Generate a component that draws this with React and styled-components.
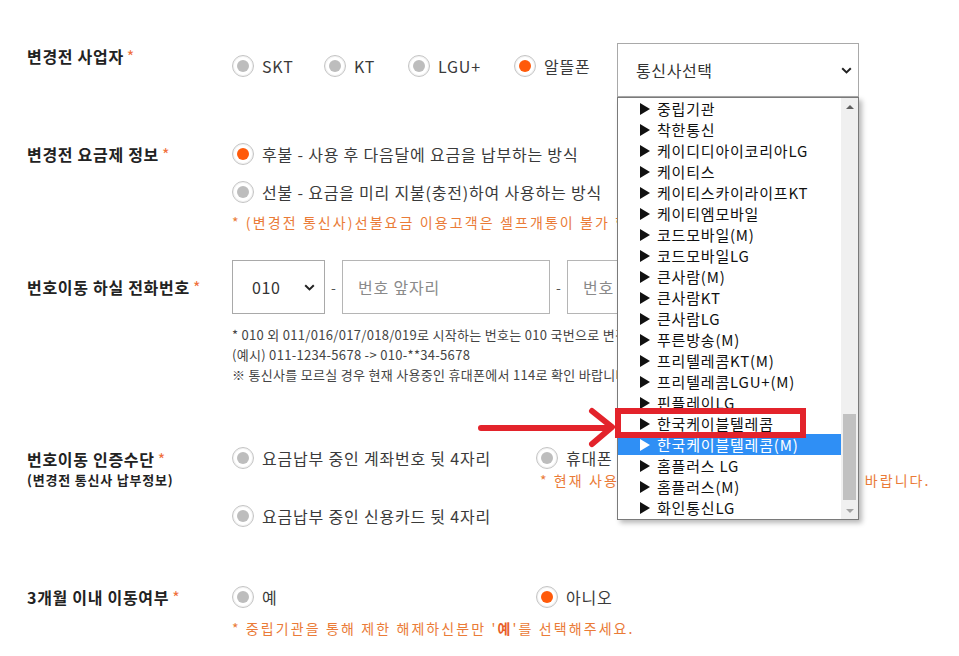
import React from "react";
import styled, { createGlobalStyle } from "styled-components";

const GlobalStyle = createGlobalStyle`
  html, body {
    margin: 0;
    padding: 0;
    background: #fff;
  }
  body {
    font-family: "Noto Sans CJK KR", "Noto Sans", sans-serif;
    color: #333;
  }
`;

const Page = styled.div`
  position: relative;
  width: 959px;
  height: 656px;
  overflow: hidden;
  padding: 43px 0 0 27px;
  box-sizing: border-box;
`;

const Row = styled.div`
  display: grid;
  grid-template-columns: 205px 1fr;
  margin-top: ${(p) => p.$top || 0}px;
`;

const Label = styled.div`
  font-size: 16px;
  font-weight: 700;
  line-height: 26px;
  color: #222;
  padding-top: ${(p) => p.$pad || 0}px;
  align-self: ${(p) => (p.$center ? "center" : "start")};
  letter-spacing: 0.7px;
`;

const Star = styled.span`
  color: #f0703c;
  font-weight: 400;
  margin-left: 3px;
`;

const SubLabel = styled.div`
  font-size: 13px;
  line-height: 16px;
  font-weight: 700;
  color: #222;
  letter-spacing: 0.8px;
`;

const Inline = styled.div`
  display: flex;
  align-items: flex-start;
`;

const Stack = styled.div`
  display: flex;
  flex-direction: column;
  align-items: flex-start;
  gap: ${(p) => p.$gap || 0}px;
`;

const Pair = styled.div`
  display: grid;
  grid-template-columns: 304px 1fr;
  row-gap: 14px;
  align-items: start;
`;

const Option = styled.label`
  display: flex;
  align-items: center;
  gap: 8px;
  height: 26px;
  box-sizing: border-box;
  width: ${(p) => (p.$w ? `${p.$w}px` : "auto")};
  font-size: 16px;
  color: #3a3a3a;
  margin-top: ${(p) => p.$top || 0}px;
  white-space: nowrap;
  letter-spacing: 0.8px;
`;

const Radio = styled.span`
  width: 20px;
  height: 20px;
  flex: none;
  border-radius: 50%;
  border: 1px solid #c4c4c4;
  background: #fff;
  box-shadow: inset 0 0 0 1px #f2f2f2;
  display: flex;
  align-items: center;
  justify-content: center;
  &::after {
    content: "";
    width: 12px;
    height: 12px;
    border-radius: 50%;
    background: ${(p) => (p.$on ? "#ff5a0a" : "#bdbdbd")};
  }
`;

const Note = styled.div`
  font-size: 14px;
  line-height: ${(p) => p.$lh || 20}px;
  color: #ea7b37;
  letter-spacing: 2.1px;
  white-space: nowrap;
  margin-top: ${(p) => p.$top || 0}px;
  padding-left: ${(p) => p.$indent || 0}px;
  b {
    font-weight: 700;
    color: #e8602a;
  }
`;

const Help = styled.div`
  margin-top: 11px;
  font-size: 13px;
  line-height: 20px;
  color: #444;
  letter-spacing: 0.3px;
  white-space: nowrap;
`;

const SelectWrap = styled.div`
  position: relative;
`;

const SelectBox = styled.div`
  display: flex;
  align-items: center;
  justify-content: space-between;
  box-sizing: border-box;
  width: ${(p) => p.$w}px;
  height: 54px;
  border: 1px solid #a9a9a9;
  background: #fff;
  padding: 0 ${(p) => p.$pr || 6}px 0 ${(p) => p.$pl || 18}px;
  font-size: 16px;
  color: #333;
  letter-spacing: 0.6px;
`;

const Chevron = () => (
  <svg width="11" height="7" viewBox="0 0 11 7">
    <path d="M1.2 1.2 L5.5 5.4 L9.8 1.2" fill="none" stroke="#222" strokeWidth="2" />
  </svg>
);

const Dropdown = styled.div`
  position: absolute;
  top: 100%;
  left: 0;
  width: 242px;
  height: 423px;
  box-sizing: border-box;
  border: 1px solid #7a7a7a;
  background: #fff;
  display: flex;
  box-shadow: 3px 3px 5px rgba(0, 0, 0, 0.28);
  z-index: 5;
`;

const List = styled.div`
  flex: 1;
  display: flex;
  flex-direction: column;
  overflow: hidden;
`;

const Item = styled.div`
  height: 21px;
  flex: none;
  display: flex;
  align-items: center;
  gap: 7px;
  padding-left: 22px;
  font-size: 15px;
  color: ${(p) => (p.$active ? "#fff" : "#111")};
  background: ${(p) => (p.$active ? "#2f8ff5" : "transparent")};
  white-space: nowrap;
  letter-spacing: 0.8px;
`;

const Tri = styled.span`
  width: 0;
  height: 0;
  border-left: 10px solid currentColor;
  border-top: 6px solid transparent;
  border-bottom: 6px solid transparent;
`;

const Scrollbar = styled.div`
  width: 17px;
  flex: none;
  background: #f0f0f0;
  display: flex;
  flex-direction: column;
  align-items: center;
`;

const ScrollArrow = styled.div`
  height: 17px;
  flex: none;
  display: flex;
  align-items: center;
  justify-content: center;
  &::after {
    content: "";
    border-left: 4px solid transparent;
    border-right: 4px solid transparent;
    ${(p) =>
      p.$down
        ? "border-top: 4px solid #a3a3a3;"
        : "border-bottom: 4px solid #606060;"}
  }
`;

const Track = styled.div`
  flex: 1;
  width: 100%;
  display: flex;
  flex-direction: column;
  justify-content: flex-end;
  align-items: center;
  padding-bottom: 2px;
  box-sizing: border-box;
`;

const Thumb = styled.div`
  width: 13px;
  height: 86px;
  background: #c1c1c1;
`;

const PhoneRow = styled.div`
  display: flex;
  align-items: center;
  height: 54px;
`;

const Input = styled.div`
  box-sizing: border-box;
  width: 208px;
  height: 54px;
  border: 1px solid #b5b5b5;
  display: flex;
  align-items: center;
  padding-left: 15px;
  font-size: 16px;
  color: #8a8a8a;
  letter-spacing: 0.8px;
`;

const Dash = styled.span`
  width: 17px;
  text-align: center;
  font-size: 14px;
  color: #555;
`;

const Highlight = styled.div`
  position: absolute;
  left: 615px;
  top: 408px;
  width: 191px;
  height: 30px;
  box-sizing: border-box;
  border: 6px solid #e3232b;
  z-index: 6;
`;

const Arrow = styled.svg`
  position: absolute;
  left: 474px;
  top: 404px;
  z-index: 6;
`;

const carriers = [
  "중립기관",
  "착한통신",
  "케이디디아이코리아LG",
  "케이티스",
  "케이티스카이라이프KT",
  "케이티엠모바일",
  "코드모바일(M)",
  "코드모바일LG",
  "큰사람(M)",
  "큰사람KT",
  "큰사람LG",
  "푸른방송(M)",
  "프리텔레콤KT(M)",
  "프리텔레콤LGU+(M)",
  "핀플레이LG",
  "한국케이블텔레콤",
  "한국케이블텔레콤(M)",
  "홈플러스 LG",
  "홈플러스(M)",
  "화인통신LG",
];

const App = () => {
  return (
    <Page>
      <GlobalStyle />

      <Row>
        <Label>
          변경전 사업자<Star>*</Star>
        </Label>
        <Inline>
          <Option $top={10} $w={92}>
            <Radio />
            SKT
          </Option>
          <Option $top={10} $w={84}>
            <Radio />
            KT
          </Option>
          <Option $top={10} $w={106}>
            <Radio />
            LGU+
          </Option>
          <Option $top={10} $w={103}>
            <Radio $on />
            알뜰폰
          </Option>
          <SelectWrap>
            <SelectBox $w={242}>
              통신사선택
              <Chevron />
            </SelectBox>
            <Dropdown>
              <List>
                {carriers.map((name) => (
                  <Item key={name} $active={name === "한국케이블텔레콤(M)"}>
                    <Tri />
                    {name}
                  </Item>
                ))}
              </List>
              <Scrollbar>
                <ScrollArrow />
                <Track>
                  <Thumb />
                </Track>
                <ScrollArrow $down />
              </Scrollbar>
            </Dropdown>
          </SelectWrap>
        </Inline>
      </Row>

      <Row $top={44}>
        <Label>
          변경전 요금제 정보<Star>*</Star>
        </Label>
        <Stack $gap={12}>
          <Option>
            <Radio $on />
            후불 - 사용 후 다음달에 요금을 납부하는 방식
          </Option>
          <Option>
            <Radio />
            선불 - 요금을 미리 지불(충전)하여 사용하는 방식
          </Option>
          <Note $top={-5}>* (변경전 통신사)선불요금 이용고객은 셀프개통이 불가 합니다.</Note>
        </Stack>
      </Row>

      <Row $top={28}>
        <Label $center>
          번호이동 하실 전화번호<Star>*</Star>
        </Label>
        <PhoneRow>
          <SelectBox $w={93} $pl={19} $pr={9}>
            010
            <Chevron />
          </SelectBox>
          <Dash>-</Dash>
          <Input>번호 앞자리</Input>
          <Dash>-</Dash>
          <Input>번호 뒷자리</Input>
        </PhoneRow>
      </Row>
      <Row>
        <div />
        <Help>
          * 010 외 011/016/017/018/019로 시작하는 번호는 010 국번으로 변경되어 개통됩니다.
          <br />
          (예시) 011-1234-5678 -&gt; 010-**34-5678
          <br />※ 통신사를 모르실 경우 현재 사용중인 휴대폰에서 114로 확인 바랍니다.
        </Help>
      </Row>

      <Row $top={60}>
        <div>
          <Label $pad={1}>
            번호이동 인증수단<Star>*</Star>
          </Label>
          <SubLabel>(변경전 통신사 납부정보)</SubLabel>
        </div>
        <Pair>
          <Option>
            <Radio />
            요금납부 중인 계좌번호 뒷 4자리
          </Option>
          <div>
            <Option>
              <Radio />
              휴대폰 본인인증
            </Option>
            <Note $lh={18} $indent={4}>
              * 현재 사용중인 휴대폰 번호로 본인인증하시기 바랍니다.
            </Note>
          </div>
          <Option>
            <Radio />
            요금납부 중인 신용카드 뒷 4자리
          </Option>
        </Pair>
      </Row>

      <Row $top={55}>
        <Label>
          3개월 이내 이동여부<Star>*</Star>
        </Label>
        <div>
          <Pair>
            <Option>
              <Radio />예
            </Option>
            <Option>
              <Radio $on />
              아니오
            </Option>
          </Pair>
          <Note $top={8}>
            * 중립기관을 통해 제한 해제하신분만 '<b>예</b>'를 선택해주세요.
          </Note>
        </div>
      </Row>

      <Highlight />
      <Arrow width="150" height="48" viewBox="0 0 150 48">
        <path
          d="M7 24 L134 24 M118 7 L138 23 L118 40"
          fill="none"
          stroke="#e3232b"
          strokeWidth="6"
          strokeLinecap="round"
          strokeLinejoin="round"
        />
      </Arrow>
    </Page>
  );
};

export default App;
